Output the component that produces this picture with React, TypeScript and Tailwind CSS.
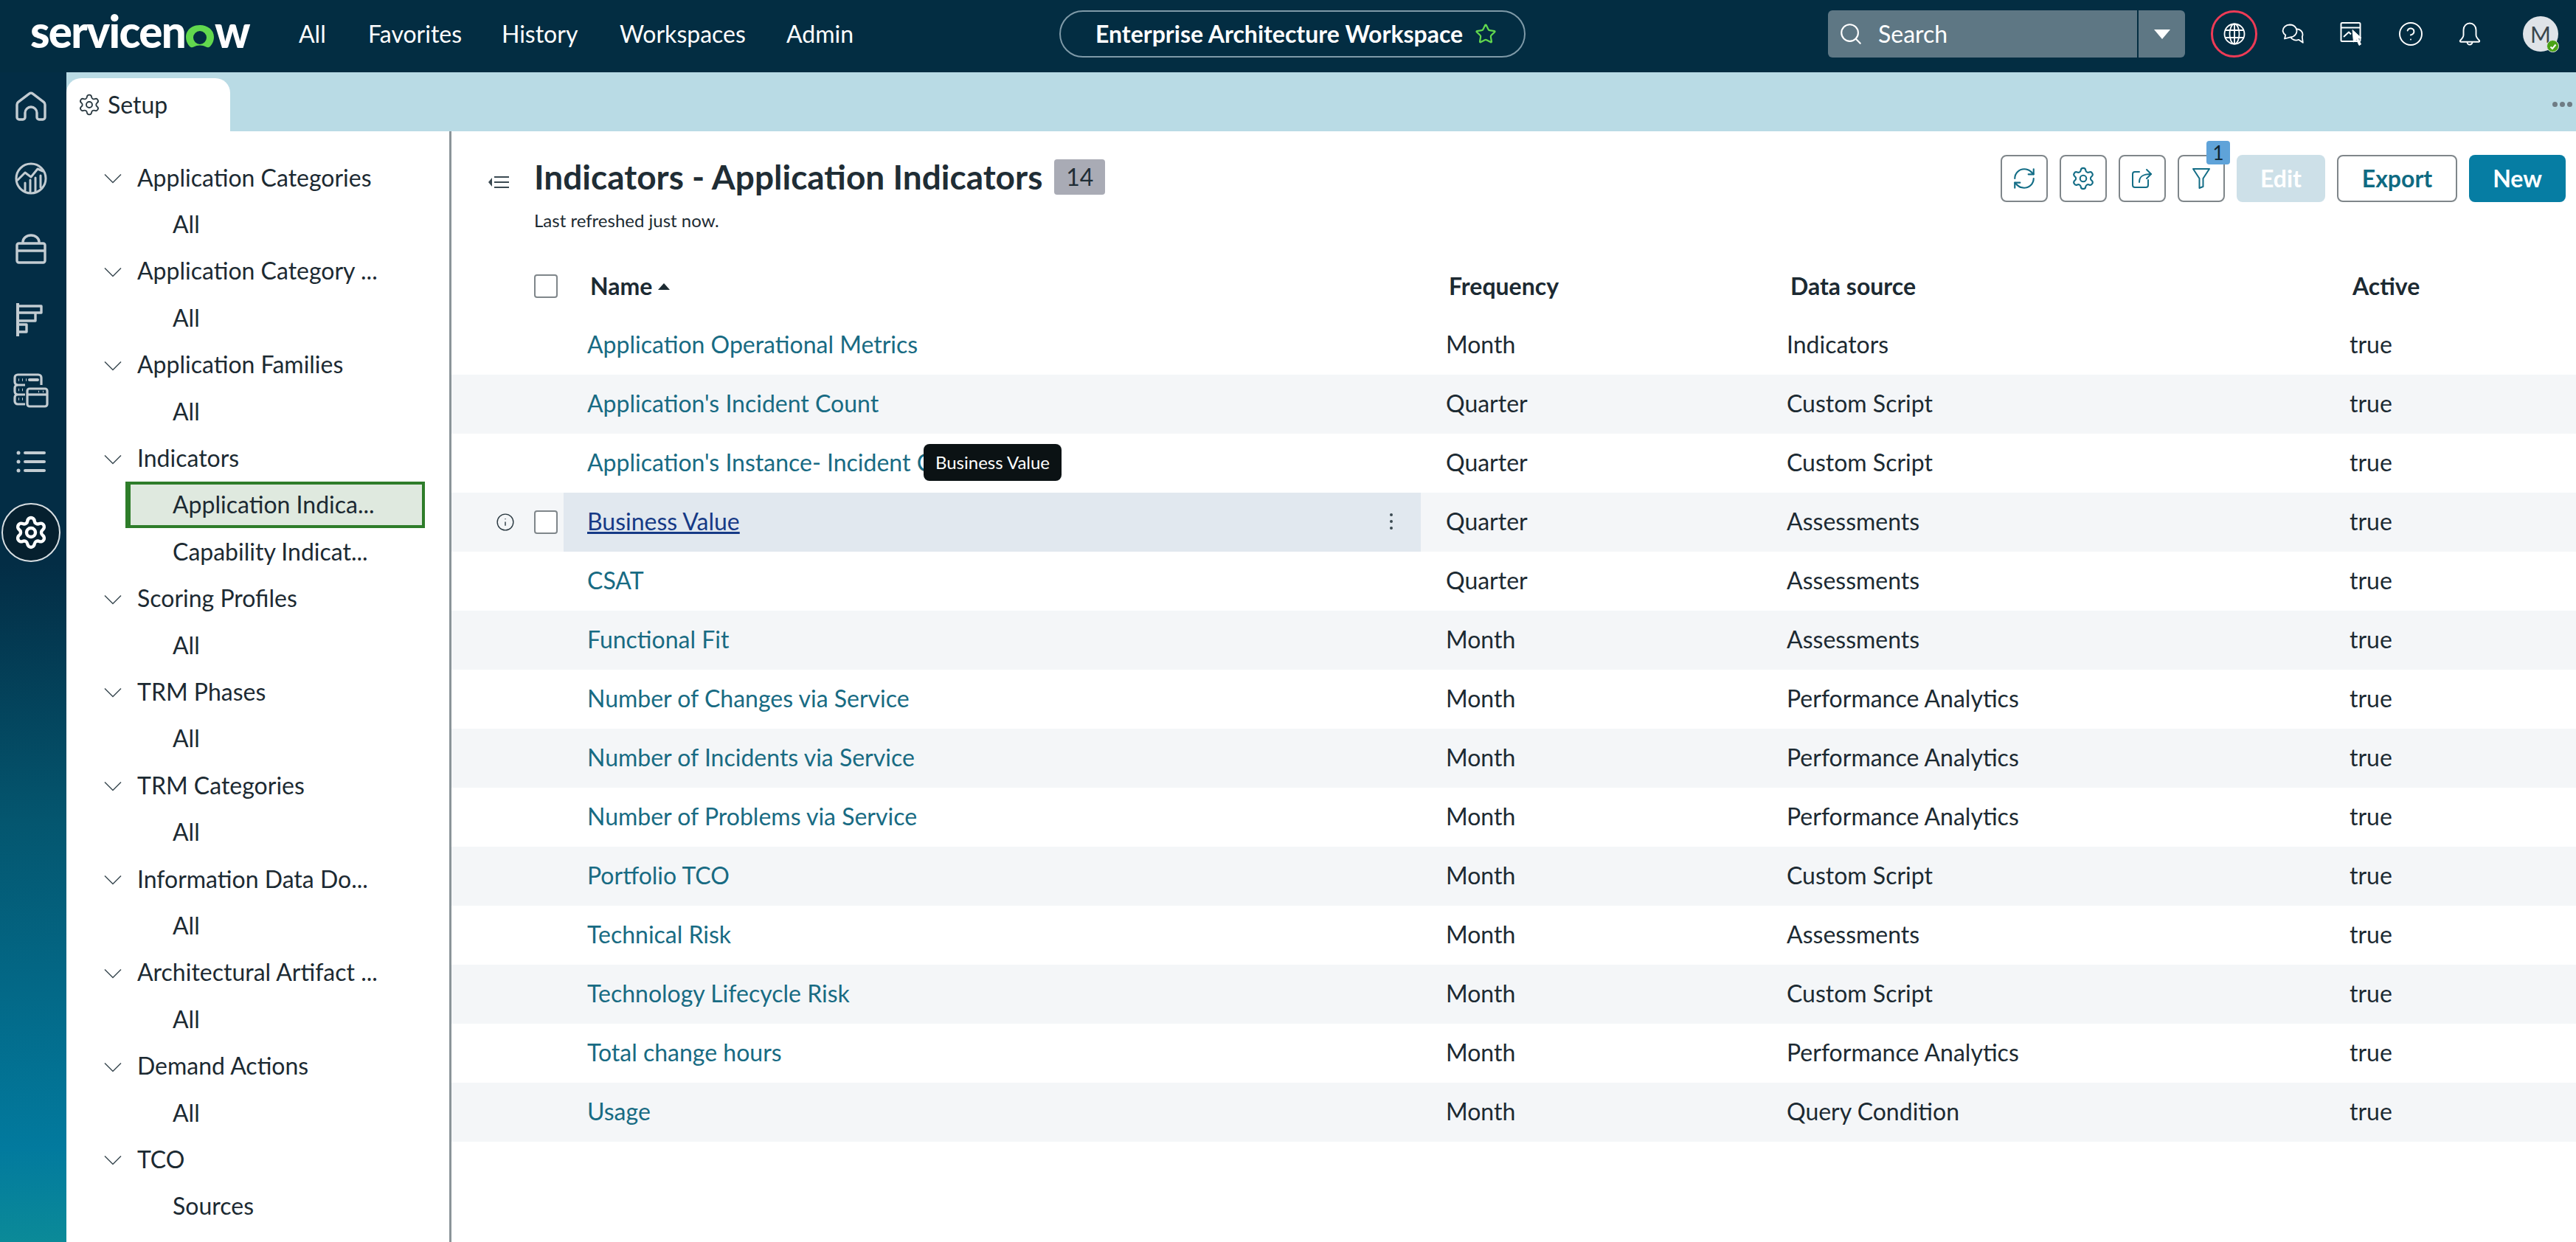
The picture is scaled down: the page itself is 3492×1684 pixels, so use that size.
import React from "react";
import { Settings, Search, CircleHelp, RefreshCw, Star, Info } from "lucide-react";

const railC = "#c3ccd2";

function RailHome() {
  return (
    <svg width="44" height="44" viewBox="0 0 44 44" fill="none" stroke={railC} strokeWidth="3.4" strokeLinejoin="round">
      <path d="M3 35V18a5 5 0 0 1 1.7-3.6L19.500 3.200a3.600 3.600 0 0 1 5 0L39.300 14.400A5 5 0 0 1 41 18V35a3 3 0 0 1-3 3H33a3 3 0 0 1-3-3V29a8 8 0 0 0-16 0V35a3 3 0 0 1-3 3H6a3 3 0 0 1-3-3Z" />
    </svg>
  );
}
function RailChart() {
  return (
    <svg width="44" height="44" viewBox="0 0 44 44" fill="none" stroke={railC} strokeWidth="3" strokeLinejoin="round" strokeLinecap="round">
      <circle cx="22" cy="22" r="20" />
      <path d="M4 24 14 14 22 20 31 9 38 12" />
      <path d="M14 38V28M21 40V24M28 40V21M35 34V18" />
    </svg>
  );
}
function RailCase() {
  return (
    <svg width="44" height="44" viewBox="0 0 44 44" fill="none" stroke={railC} strokeWidth="3.4" strokeLinejoin="round">
      <path d="M11 14V12a11 9 0 0 1 22 0V14" />
      <rect x="3" y="14" width="38" height="26" rx="2.500" />
      <path d="M3 24H41" />
    </svg>
  );
}
function RailRoadmap() {
  return (
    <svg width="36" height="46" viewBox="0 0 36 46" fill="none" stroke={railC} strokeWidth="3.4">
      <path d="M2 0V45" strokeWidth="4" />
      <path d="M2 4H34V13H2M2 13H26V24H2M2 29H14V39H2" strokeLinejoin="round" />
    </svg>
  );
}
function RailServers() {
  return (
    <svg width="48" height="48" viewBox="0 0 48 48" fill="none" stroke={railC} strokeWidth="3.2" strokeLinejoin="round">
      <path d="M38 16V6a4 4 0 0 0-4-4H6a4 4 0 0 0-4 4v6a4 4 0 0 0 4 4H16" />
      <path d="M6 16a4 4 0 0 0-4 4v5a4 4 0 0 0 4 4H16M6 29a4 4 0 0 0-4 4v5a4 4 0 0 0 4 4H16" />
      <path d="M22 9H33" strokeWidth="4" strokeLinecap="round" />
      <path d="M7 9H8M12 9H13M17 9H18M7 22.500H8M12 22.500H13M7 35H8M12 35H13" strokeWidth="3.4" />
      <rect x="19" y="21" width="27" height="24" rx="3" />
      <path d="M19 29H46" />
      <path d="M34 25H35M40 25H41" strokeWidth="2.500" />
    </svg>
  );
}
function RailList() {
  return (
    <svg width="44" height="32" viewBox="0 0 44 32" fill={railC}>
      <circle cx="5" cy="4" r="2.500" />
      <circle cx="5" cy="16" r="2.500" />
      <circle cx="5" cy="28" r="2.500" />
      <rect x="12" y="2" width="30" height="4" rx="2" />
      <rect x="12" y="14" width="30" height="4" rx="2" />
      <rect x="12" y="26" width="30" height="4" rx="2" />
    </svg>
  );
}
function Globe2() {
  return (
    <svg width="30" height="30" viewBox="0 0 30 30" fill="none" stroke="#fff" strokeWidth="1.800">
      <circle cx="15" cy="15" r="13.500" />
      <ellipse cx="15" cy="15" rx="6.500" ry="13.500" />
      <path d="M15 1.500V28.500M2.800 10H27.200M2.800 20H27.200" />
    </svg>
  );
}
function Chat() {
  return (
    <svg width="30" height="28" viewBox="0 0 30 28" fill="none" stroke="#fff" strokeWidth="1.800" strokeLinejoin="round">
      <path d="M11 1.500a9.500 8.500 0 0 1 7.800 13.300 9 9 0 0 1-6.800 3.600L4 20.500l1.300-5A8.500 8.500 0 0 1 1.500 10a9.500 8.500 0 0 1 9.500-8.500Z" />
      <path d="M19 7.500a8 7.500 0 0 1 8.800 10.300l1 8-5.800-4a8.500 8.500 0 0 1-11-3.500" />
    </svg>
  );
}
function WindowCursor() {
  return (
    <svg width="32" height="34" viewBox="0 0 32 34" fill="none" stroke="#fff" strokeWidth="2" strokeLinejoin="round">
      <rect x="1.500" y="2" width="26" height="25" rx="1.500" />
      <path d="M1.500 8.500H27.500" />
      <path d="M5 21l7-6.500 3 3" />
      <path d="M17 11.500 29 22.500 24.500 23 28.500 31 26 32.500 22.500 24.500 18.500 28Z" fill="#fff" strokeWidth="1" />
    </svg>
  );
}
function Bell2() {
  return (
    <svg width="30" height="32" viewBox="0 0 30 32" fill="none" stroke="#fff" strokeWidth="1.900" strokeLinejoin="round">
      <path d="M15 1.500a8.500 9 0 0 1 8.500 9v7c0 3 1.500 4.500 4.500 7.500 .5 1 0 1.800-1 1.800H3c-1 0-1.500-.8-1-1.800 3-3 4.500-4.500 4.500-7.500v-7a8.500 9 0 0 1 8.500-9Z" />
      <path d="M11.500 27a3.500 3.500 0 0 0 7 0" />
    </svg>
  );
}
function ShareBox() {
  return (
    <svg width="28" height="28" viewBox="0 0 28 28" fill="none" stroke="#136d86" strokeWidth="2" strokeLinejoin="round" strokeLinecap="round">
      <path d="M10 5H4a3 3 0 0 0-3 3v15a3 3 0 0 0 3 3h15a3 3 0 0 0 3-3v-7" />
      <path d="M10 19c0-8 5-11 16-11" />
      <path d="M20 2l6 6-6 6" />
    </svg>
  );
}
function FilterIcon() {
  return (
    <svg width="24" height="28" viewBox="0 0 24 28" fill="none" stroke="#136d86" strokeWidth="2" strokeLinejoin="round">
      <path d="M1 1H23L14.500 14V25L9.500 27V14Z" />
    </svg>
  );
}
function CollapseIcon() {
  return (
    <svg width="28" height="18" viewBox="0 0 28 18" fill="#3b4a52">
      <path d="M5 3V15L0 9Z" />
      <rect x="8" y="1" width="20" height="2" />
      <rect x="8" y="8" width="20" height="2" />
      <rect x="8" y="15" width="20" height="2" />
    </svg>
  );
}
function TreeChevron() {
  return (
    <svg width="24" height="14" viewBox="0 0 24 14" fill="none" stroke="#3b4a52" strokeWidth="1.500" className="mt-[3px] shrink-0">
      <path d="M1 1.500 12 12.500 23 1.500" />
    </svg>
  );
}
function LogoO() {
  return (
    <svg width="38" height="31" viewBox="0 0 38 31" className="mx-[1px]">
      <path fillRule="evenodd" fill="#62d84e" d="M19 0C29.500 0 38 6.800 38 16c0 5.500-2.300 10-5.200 13-1.600 1.600-3.800 1.700-5.600.6C25 28.300 22 27.500 19 27.500s-6 .8-8.200 2.100c-1.800 1.100-4 1-5.600-.6C2.300 26 0 21.500 0 16 0 6.800 8.500 0 19 0ZM19 8a9 9 0 1 0 0 18 9 9 0 0 0 0-18Z" />
    </svg>
  );
}

const tree: { t: string; kind: "h" | "c" | "s" }[] = [
  { t: "Application Categories", kind: "h" },
  { t: "All", kind: "c" },
  { t: "Application Category ...", kind: "h" },
  { t: "All", kind: "c" },
  { t: "Application Families", kind: "h" },
  { t: "All", kind: "c" },
  { t: "Indicators", kind: "h" },
  { t: "Application Indica...", kind: "s" },
  { t: "Capability Indicat...", kind: "c" },
  { t: "Scoring Profiles", kind: "h" },
  { t: "All", kind: "c" },
  { t: "TRM Phases", kind: "h" },
  { t: "All", kind: "c" },
  { t: "TRM Categories", kind: "h" },
  { t: "All", kind: "c" },
  { t: "Information Data Do...", kind: "h" },
  { t: "All", kind: "c" },
  { t: "Architectural Artifact ...", kind: "h" },
  { t: "All", kind: "c" },
  { t: "Demand Actions", kind: "h" },
  { t: "All", kind: "c" },
  { t: "TCO", kind: "h" },
  { t: "Sources", kind: "c" },
];

const rows = [
  ["Application Operational Metrics", "Month", "Indicators"],
  ["Application's Incident Count", "Quarter", "Custom Script"],
  ["Application's Instance- Incident Count", "Quarter", "Custom Script"],
  ["Business Value", "Quarter", "Assessments"],
  ["CSAT", "Quarter", "Assessments"],
  ["Functional Fit", "Month", "Assessments"],
  ["Number of Changes via Service", "Month", "Performance Analytics"],
  ["Number of Incidents via Service", "Month", "Performance Analytics"],
  ["Number of Problems via Service", "Month", "Performance Analytics"],
  ["Portfolio TCO", "Month", "Custom Script"],
  ["Technical Risk", "Month", "Assessments"],
  ["Technology Lifecycle Risk", "Month", "Custom Script"],
  ["Total change hours", "Month", "Performance Analytics"],
  ["Usage", "Month", "Query Condition"],
];

export default function App() {
  return (
    <div className="flex flex-col w-screen h-screen overflow-hidden bg-white text-[#1c2a32] text-[32px] [font-family:Lato,sans-serif]">
      <header className="flex items-center shrink-0 h-[98px] pb-[6px] bg-[#032d42] text-white">
        <div className="flex items-center w-[1436px] shrink-0 pl-[41px]">
          <div className="flex items-center w-[364px] shrink-0 text-[60px] leading-none font-black -mt-[8px] tracking-[-1.700px]">
            <span>servicen</span>
            <span className="mt-[14px]"><LogoO /></span>
            <span>w</span>
          </div>
          <nav className="flex items-center">
            <span className="w-[94px]">All</span>
            <span className="w-[181px]">Favorites</span>
            <span className="w-[160px]">History</span>
            <span className="w-[226px]">Workspaces</span>
            <span>Admin</span>
          </nav>
        </div>
        <div className="flex items-center shrink-0 w-[632px] h-[64px] pl-[47px] rounded-full border-2 border-[#7f9aa8] font-bold">
          <span>Enterprise Architecture Workspace</span>
          <Star size={30} strokeWidth={1.8} className="ml-[16px] text-[#62d84e]" />
        </div>
        <div className="flex items-center shrink-0 ml-[410px] w-[484px] h-[64px] rounded-md bg-[#5e7784]">
          <Search size={34} strokeWidth={1.5} className="ml-[14px] text-white" />
          <span className="ml-[20px] flex-1">Search</span>
          <div className="flex items-center justify-center w-[65px] h-full border-l-2 border-[#032d42]">
            <div className="w-0 h-0 border-l-[11px] border-r-[11px] border-t-[13px] border-l-transparent border-r-transparent border-t-white" />
          </div>
        </div>
        <div className="flex items-center justify-center shrink-0 ml-[35px] w-[63px] h-[64px] rounded-full border-[3px] border-[#ee3b56]">
          <Globe2 />
        </div>
        <div className="flex items-center shrink-0 ml-[8px]">
          <span className="flex justify-center w-[80px]"><Chat /></span>
          <span className="flex justify-center w-[80px]"><WindowCursor /></span>
          <span className="flex justify-center w-[80px]"><CircleHelp size={36} strokeWidth={1.3} /></span>
          <span className="flex justify-center w-[80px]"><Bell2 /></span>
        </div>
        <div className="relative flex items-center justify-center shrink-0 ml-[32px] w-[48px] h-[48px] rounded-full bg-[#dfe3e8] text-[#3a464d] text-[30px]">
          M
          <span className="absolute right-[-1px] bottom-[-1px] flex items-center justify-center w-[17px] h-[17px] rounded-full bg-[#4aa316] border border-[#dfe3e8]">
            <svg width="10" height="10" viewBox="0 0 10 10" fill="none" stroke="#fff" strokeWidth="2"><path d="M1.500 5.500 4 8 8.500 2.500" /></svg>
          </span>
        </div>
      </header>
      <div className="flex flex-1 min-h-0">
        <aside className="flex flex-col items-center shrink-0 w-[90px] pr-[6px] bg-[linear-gradient(180deg,#032d45_0%,#032d45_42%,#04566f_64%,#027a9e_92%,#0b8a98_100%)]">
          <div className="flex items-center justify-center h-[96px] w-full"><RailHome /></div>
          <div className="flex items-center justify-center h-[96px] w-full"><RailChart /></div>
          <div className="flex items-center justify-center h-[96px] w-full"><RailCase /></div>
          <div className="flex items-center justify-center h-[96px] w-full pr-[4px]"><RailRoadmap /></div>
          <div className="flex items-center justify-center h-[96px] w-full"><RailServers /></div>
          <div className="flex items-center justify-center h-[96px] w-full"><RailList /></div>
          <div className="flex items-center justify-center w-[80px] h-[80px] mt-[8px] shrink-0 rounded-full border-2 border-[#d8dfe3] bg-[#06202f]">
            <Settings size={48} strokeWidth={2.2} className="text-white" />
          </div>
        </aside>
        <div className="flex flex-col flex-1 min-w-0">
          <div className="flex items-end justify-between shrink-0 h-[80px] bg-[#b9dbe5]">
            <div className="flex items-center w-[222px] h-[72px] pl-[15px] rounded-t-[20px] bg-white">
              <Settings size={32} strokeWidth={1.4} className="text-[#2b3a42]" />
              <span className="ml-[9px]">Setup</span>
            </div>
            <div className="flex gap-[3px] pr-[5px] pb-[33px]">
              <span className="w-[7px] h-[7px] rounded-full bg-[#6f7c84]" />
              <span className="w-[7px] h-[7px] rounded-full bg-[#6f7c84]" />
              <span className="w-[7px] h-[7px] rounded-full bg-[#6f7c84]" />
            </div>
          </div>
          <div className="flex flex-1 min-h-0">
            <nav className="shrink-0 w-[522px] pt-[31px] overflow-hidden border-r-[3px] border-[#8b9499]">
              {tree.map((it, i) => {
                if (it.kind === "h")
                  return (
                    <div key={i} className="flex items-center h-[63.400px] pl-[51px]">
                      <TreeChevron />
                      <span className="ml-[21px]">{it.t}</span>
                    </div>
                  );
                if (it.kind === "s")
                  return (
                    <div key={i} className="flex items-center h-[63.400px] ml-[80px] w-[406px] pl-[57px] bg-[#dfe9df] border-[4px] border-l-[7px] border-[#2e7d2a]">
                      {it.t}
                    </div>
                  );
                return (
                  <div key={i} className="flex items-center h-[63.400px] pl-[144px]">
                    {it.t}
                  </div>
                );
              })}
            </nav>
            <main className="flex-1 min-w-0">
              <div className="flex justify-between h-[170px] pt-[32px]">
                <div className="flex pl-[50px]">
                  <div className="mt-[28px]"><CollapseIcon /></div>
                  <div className="ml-[34px]">
                    <div className="flex items-center h-[60px]">
                      <h1 className="text-[46px] font-bold leading-none text-[#1f2d35]">Indicators - Application Indicators</h1>
                      <span className="flex items-center justify-center ml-[16px] w-[69px] h-[48px] rounded-[4px] bg-[#a9abb5] text-[#1f2d35]">14</span>
                    </div>
                    <div className="mt-[11px] text-[24px] leading-[36px]">Last refreshed just now.</div>
                  </div>
                </div>
                <div className="flex pr-[14px] gap-[16px] h-[64px]">
                  <button className="flex items-center justify-center w-[64px] h-[64px] rounded-lg border-2 border-[#7f868a] text-[#136d86]"><RefreshCw size={34} strokeWidth={1.5} /></button>
                  <button className="flex items-center justify-center w-[64px] h-[64px] rounded-lg border-2 border-[#7f868a] text-[#136d86]"><Settings size={34} strokeWidth={1.5} /></button>
                  <button className="flex items-center justify-center w-[64px] h-[64px] rounded-lg border-2 border-[#7f868a]"><ShareBox /></button>
                  <button className="relative flex items-center justify-center w-[64px] h-[64px] rounded-lg border-2 border-[#7f868a]">
                    <FilterIcon />
                    <span className="absolute right-[-9px] top-[-21px] flex items-center justify-center w-[32px] h-[32px] rounded-[4px] bg-[#5fa3d9] text-[26px] text-[#0d2430]">1</span>
                  </button>
                  <button className="w-[120px] h-[64px] rounded-lg bg-[#cde0e8] text-white font-bold">Edit</button>
                  <button className="w-[163px] h-[64px] rounded-lg border-2 border-[#7f868a] text-[#0f6a82] font-bold">Export</button>
                  <button className="w-[131px] h-[64px] rounded-lg bg-[#067da3] text-white font-bold">New</button>
                </div>
              </div>
              <div className="flex items-center h-[80px] font-bold">
                <div className="flex justify-end w-[144px] shrink-0">
                  <span className="w-[32px] h-[32px] rounded-[4px] border-2 border-[#7f868a]" />
                </div>
                <div className="w-[1170px] shrink-0 pl-[44px] flex items-center">
                  Name
                  <span className="ml-[8px] w-0 h-0 border-l-[8px] border-r-[8px] border-b-[9px] border-l-transparent border-r-transparent border-b-[#1c2a32]" />
                </div>
                <div className="w-[462px] shrink-0 pl-[38px]">Frequency</div>
                <div className="w-[763px] shrink-0 pl-[39px]">Data source</div>
                <div className="pl-[38px]">Active</div>
              </div>
              {rows.map((r, i) => {
                const hover = i === 3;
                return (
                  <div key={i} className={i % 2 === 1 ? "relative flex items-center h-[80px] bg-[#f4f6f8]" : "relative flex items-center h-[80px]"}>
                    <div className="flex items-center justify-end w-[152px] shrink-0 pr-[8px]">
                      {hover && (
                        <>
                          <Info size={26} strokeWidth={1.3} className="mr-[26px] text-[#2b3a42]" />
                          <span className="w-[32px] h-[32px] rounded-[4px] border-2 border-[#7f868a] bg-white" />
                        </>
                      )}
                    </div>
                    <div className={hover ? "flex items-center justify-between w-[1162px] h-full shrink-0 pl-[32px] pr-[37px] pb-[3px] bg-[#e1e8ef]" : "flex items-center w-[1162px] h-full shrink-0 pl-[32px] pb-[3px] text-[#186b83]"}>
                      <span className={hover ? "underline text-[#163a86]" : ""}>{r[0]}</span>
                      {hover && (
                        <svg width="6" height="26" viewBox="0 0 6 26" fill="#3b4a52"><circle cx="3" cy="4" r="2" /><circle cx="3" cy="13" r="2" /><circle cx="3" cy="22" r="2" /></svg>
                      )}
                    </div>
                    <div className="w-[462px] shrink-0 pl-[34px] pb-[3px]">{r[1]}</div>
                    <div className="w-[763px] shrink-0 pl-[34px] pb-[3px]">{r[2]}</div>
                    <div className="pl-[34px] pb-[3px]">true</div>
                    {i === 2 && (
                      <div className="absolute left-[640px] top-[14px] flex items-center justify-center w-[187px] h-[50px] rounded-lg bg-[#0b1214] text-[24px] text-white">Business Value</div>
                    )}
                  </div>
                );
              })}
            </main>
          </div>
        </div>
      </div>
    </div>
  );
}
